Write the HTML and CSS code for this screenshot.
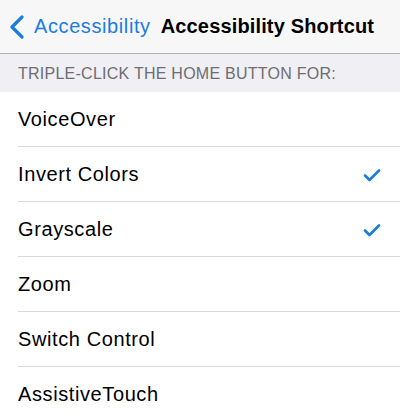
FILE: index.html
```html
<!DOCTYPE html>
<html>
<head>
<meta charset="utf-8">
<link rel="stylesheet" href="styles.css">
</head>
<body>
<div class="nav">
  <div class="back">
    <svg class="chev" width="16" height="24" viewBox="0 0 16 24"><path d="M13 2 L3 12 L13 22" fill="none" stroke="#1b7de0" stroke-width="3.2" stroke-linecap="round" stroke-linejoin="round"/></svg>
    <span class="back-label">Accessibility</span>
  </div>
  <div class="title">Accessibility Shortcut</div>
</div>
<div class="section-header">TRIPLE-CLICK THE HOME BUTTON FOR:</div>
<ul class="list">
  <li class="row"><span>VoiceOver</span></li>
  <li class="row"><span>Invert Colors</span><svg class="check" width="18" height="14" viewBox="0 0 18 14"><path d="M2 7.5 L6.5 12 L16 2.5" fill="none" stroke="#1b7de0" stroke-width="2.6" stroke-linecap="round" stroke-linejoin="round"/></svg></li>
  <li class="row"><span>Grayscale</span><svg class="check" width="18" height="14" viewBox="0 0 18 14"><path d="M2 7.5 L6.5 12 L16 2.5" fill="none" stroke="#1b7de0" stroke-width="2.6" stroke-linecap="round" stroke-linejoin="round"/></svg></li>
  <li class="row"><span>Zoom</span></li>
  <li class="row"><span>Switch Control</span></li>
  <li class="row"><span>AssistiveTouch</span></li>
</ul>
</body>
</html>
```
FILE: styles.css
```css
* { box-sizing: border-box; }
html, body {
  margin: 0;
  padding: 0;
  width: 400px;
  height: 420px;
  overflow: hidden;
  background: #ffffff;
  font-family: "Liberation Sans", Arial, sans-serif;
}
.nav {
  height: 54px;
  background: #f7f7f7;
  border-bottom: 1px solid #b2b2b2;
  display: flex;
  align-items: center;
  padding-left: 9px;
}
.back {
  display: flex;
  align-items: center;
  color: #1b7de0;
}
.chev { margin-right: 9px; margin-top: 1px; }
.back-label {
  font-size: 20px;
  letter-spacing: 0.6px;
}
.title {
  margin-left: 10px;
  font-size: 20px;
  font-weight: bold;
  color: #000;
  letter-spacing: 0.15px;
}
.section-header {
  height: 38px;
  background: #efeff4;
  color: #6d6d72;
  font-size: 16px;
  padding-left: 18px;
  padding-top: 1px;
  display: flex;
  align-items: center;
  letter-spacing: 0.25px;
}
.list {
  list-style: none;
  margin: 0;
  padding: 0 0 0 18px;
}
.row {
  height: 55px;
  border-bottom: 1px solid #d9d9dd;
  display: flex;
  align-items: center;
  justify-content: space-between;
  padding-right: 19px;
  font-size: 20px;
  color: #000;
  padding-top: 1px;
  letter-spacing: 0.6px;
}
.check { display: block; }
```
